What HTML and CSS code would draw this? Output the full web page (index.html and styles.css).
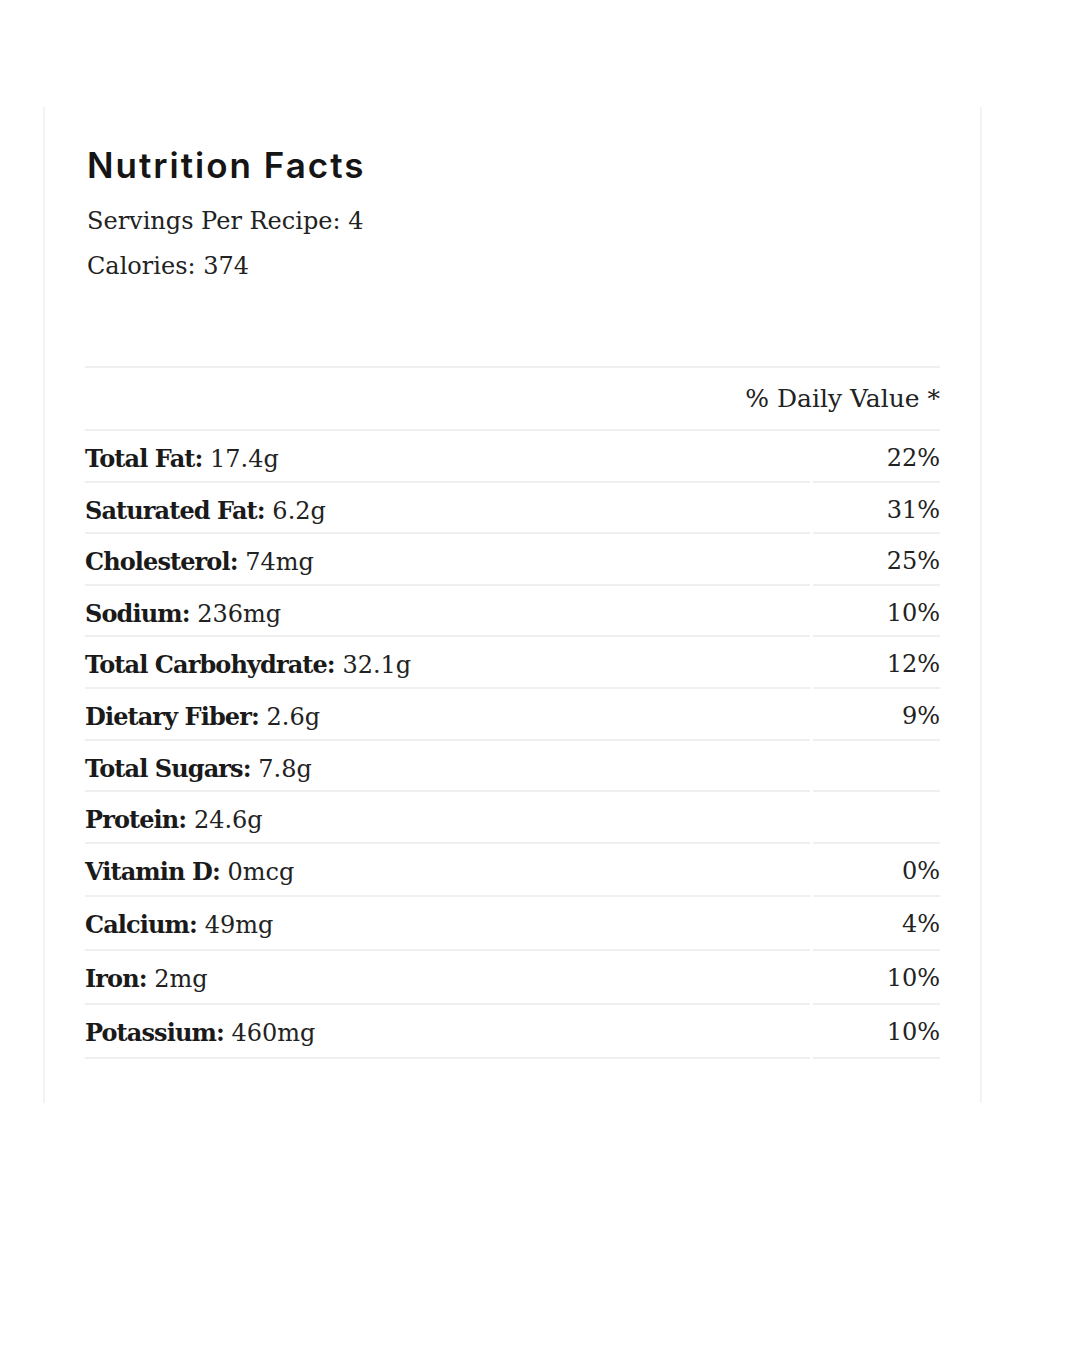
FILE: index.html
```html
<!DOCTYPE html>
<html lang="en">
<head>
<meta charset="utf-8">
<title>Nutrition Facts</title>
<link rel="stylesheet" href="styles.css">
</head>
<body>
<section class="card">
  <h2 class="title">Nutrition Facts</h2>
  <p class="meta">Servings Per Recipe: 4</p>
  <p class="meta">Calories: 374</p>
  <div class="facts">
    <div class="head">% Daily Value *</div>
    <div class="cell name"><b>Total Fat:</b> 17.4g</div><div class="cell pct">22%</div>
    <div class="cell name"><b>Saturated Fat:</b> 6.2g</div><div class="cell pct">31%</div>
    <div class="cell name"><b>Cholesterol:</b> 74mg</div><div class="cell pct">25%</div>
    <div class="cell name"><b>Sodium:</b> 236mg</div><div class="cell pct">10%</div>
    <div class="cell name"><b>Total Carbohydrate:</b> 32.1g</div><div class="cell pct">12%</div>
    <div class="cell name"><b>Dietary Fiber:</b> 2.6g</div><div class="cell pct">9%</div>
    <div class="cell name"><b>Total Sugars:</b> 7.8g</div><div class="cell pct"></div>
    <div class="cell name"><b>Protein:</b> 24.6g</div><div class="cell pct"></div>
    <div class="cell name tall"><b>Vitamin D:</b> 0mcg</div><div class="cell pct tall">0%</div>
    <div class="cell name tall"><b>Calcium:</b> 49mg</div><div class="cell pct tall">4%</div>
    <div class="cell name tall"><b>Iron:</b> 2mg</div><div class="cell pct tall">10%</div>
    <div class="cell name tall"><b>Potassium:</b> 460mg</div><div class="cell pct tall">10%</div>
  </div>
</section>
</body>
</html>
```

FILE: styles.css
```css
html, body {
  margin: 0;
  padding: 0;
  background: #ffffff;
}

body {
  font-family: "DejaVu Serif", "Liberation Serif", serif;
  color: #222222;
}

.card {
  box-sizing: border-box;
  width: 939px;
  margin: 107px 0 0 43px;
  padding: 38px 40px 44px 40px;
  border-left: 2px solid #f3f3f3;
  border-right: 2px solid #f3f3f3;
}

.title {
  margin: 0 0 14px 2px;
  font-family: Inter, "Open Sans", sans-serif;
  font-weight: 600;
  font-size: 35px;
  line-height: 40px;
  color: #151515;
  letter-spacing: 2px;
}

.meta {
  margin: 0 0 0 2px;
  font-size: 24px;
  line-height: 45px;
  color: #222222;
}

.facts {
  margin-top: 77px;
  display: grid;
  grid-template-columns: 1fr 127px;
  column-gap: 3px;
  font-size: 24px;
}

.head {
  grid-column: 1 / 3;
  box-sizing: border-box;
  height: 65px;
  text-align: right;
  border-top: 2px solid #efefef;
  border-bottom: 2px solid #efefef;
  padding-top: 10px;
  font-size: 25px;
  line-height: 42px;
}

.cell {
  box-sizing: border-box;
  height: 51.6px;
  border-bottom: 2px solid #efefef;
  padding-top: 6px;
  line-height: 43px;
  white-space: nowrap;
}

.cell.tall {
  height: 53.7px;
}

.cell b {
  font-weight: 700;
  font-size: 24px;
  letter-spacing: -0.9px;
  color: #1a1a1a;
}

.pct {
  text-align: right;
}
```
